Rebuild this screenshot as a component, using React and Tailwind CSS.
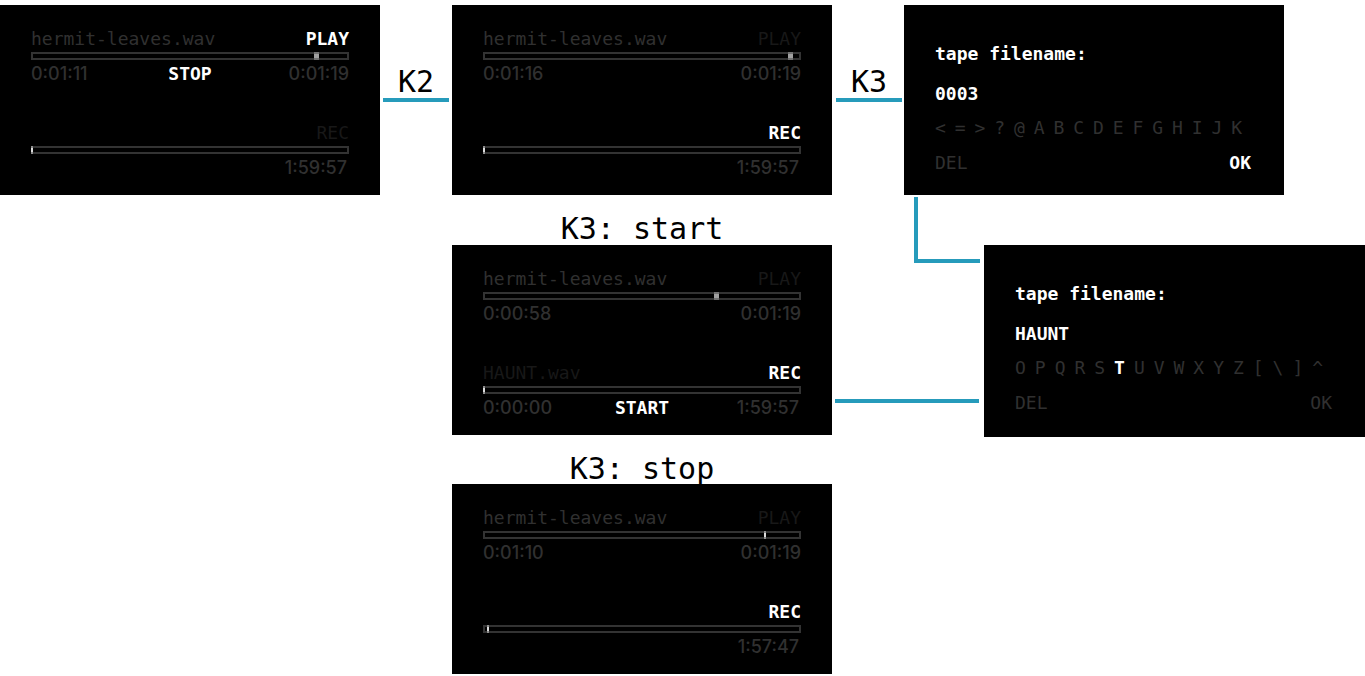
import React from "react";

const DIM = "text-[#303030]";
const FAINT = "text-[#181818]";
const LIT = "text-white font-bold";

const MONO = "font-['DejaVu_Sans_Mono',monospace]";
const TIME = "font-['Inter',sans-serif] font-medium";

function Bar({ label, at, size = "narrow" }) {
  return (
    <div
      role="progressbar"
      aria-label={label}
      aria-valuenow={Math.max(0, Math.round(at))}
      className="relative mt-[3px] mb-1 h-2 border-2 border-[#333333]"
    >
      <span
        className={
          size === "wide"
            ? "absolute -top-0.5 h-2 w-[5px] border-y-2 border-[#707070] bg-[#a0a0a0]"
            : "absolute -top-0.5 h-2 w-0.5 border-y-2 border-[#8c8c8c] bg-[#dcdcdc]"
        }
        style={{ left: `${at}%` }}
      />
    </div>
  );
}

function Track({ name, nameTone = DIM, mode, active, at, marker, elapsed, action, total, inset }) {
  return (
    <section>
      <div className="flex h-5 items-center justify-between">
        <span className={nameTone}>{name}</span>
        <button type="button" className={active ? LIT : FAINT}>
          {mode}
        </button>
      </div>
      <Bar label={`${mode} position`} at={at} size={marker} />
      <div className={`grid h-5 grid-cols-3 items-center ${DIM}`}>
        <span className={TIME}>{elapsed}</span>
        <span className="text-center">
          {action && (
            <button type="button" className={LIT}>
              {action}
            </button>
          )}
        </span>
        <span className={`text-right ${TIME} ${inset ? "pr-0.5" : ""}`}>{total}</span>
      </div>
    </section>
  );
}

function TapeScreen({ className, play, rec }) {
  return (
    <article
      className={`flex flex-col gap-[39px] self-start bg-black px-[31px] pt-6 pb-[17px] text-lg leading-5 ${MONO} ${className}`}
    >
      <Track name="hermit-leaves.wav" mode="PLAY" total="0:01:19" marker="wide" {...play} />
      <Track mode="REC" inset {...rec} />
    </article>
  );
}

function NameScreen({ className, id, value, keys, selected, okActive }) {
  return (
    <form
      className={`flex flex-col self-start bg-black pt-[39px] pr-[33px] pl-[31px] text-lg leading-5 ${MONO} ${className}`}
    >
      <label htmlFor={id} className={LIT}>
        tape filename:
      </label>
      <input
        id={id}
        defaultValue={value}
        className={`mt-5 h-5 w-full bg-transparent outline-none ${LIT}`}
      />
      <div className="mt-[14px] grid grid-cols-16">
        {keys.map((key) => (
          <button
            key={key}
            type="button"
            className={`text-left ${key === selected ? LIT : DIM}`}
          >
            {key}
          </button>
        ))}
      </div>
      <div className="mt-[15px] flex justify-between">
        <button type="button" className={DIM}>
          DEL
        </button>
        <button type="button" className={okActive ? LIT : DIM}>
          OK
        </button>
      </div>
    </form>
  );
}

function Step({ className, children }) {
  return (
    <div className={`flex flex-col pt-[61px] text-center ${className}`}>
      <span className="leading-8">{children}</span>
      <span className="h-1 bg-[#269bbb]" />
    </div>
  );
}

export default function App() {
  return (
    <main
      className={`grid min-w-[1100px] grid-cols-[380fr_72fr_380fr_72fr_80fr_300fr_81fr] bg-white pt-[5px] pb-0.5 text-[30px] text-black ${MONO}`}
    >
      <TapeScreen
        className="col-start-1 row-start-1"
        play={{ active: true, at: 89.5, elapsed: "0:01:11", action: "STOP" }}
        rec={{ at: -0.5, total: "1:59:57" }}
      />
      <Step className="col-start-2 row-start-1 px-[3px]">K2</Step>
      <TapeScreen
        className="col-start-3 row-start-1"
        play={{ at: 96.5, elapsed: "0:01:16" }}
        rec={{ active: true, at: -0.5, total: "1:59:57" }}
      />
      <Step className="col-start-4 row-start-1 pr-0.5 pl-1">K3</Step>
      <NameScreen
        className="col-span-2 col-start-5 row-start-1 pb-[22px]"
        id="tape-default"
        value="0003"
        keys={[..."<=>?@ABCDEFGHIJK"]}
        okActive
      />

      <p className="col-start-3 row-start-2 h-[50px] pt-[18px] text-center leading-8">K3: start</p>
      <span className="col-start-5 row-span-2 row-start-2 mt-0.5 mr-1 ml-[10px] h-[66px] border-b-4 border-l-4 border-[#269bbb]" />

      <TapeScreen
        className="col-start-3 row-start-3"
        play={{ at: 73, elapsed: "0:00:58" }}
        rec={{
          name: "HAUNT.wav",
          nameTone: FAINT,
          active: true,
          at: -0.5,
          elapsed: "0:00:00",
          action: "START",
          total: "1:59:57",
        }}
      />
      <span className="col-span-2 col-start-4 row-start-3 mr-[5px] mb-[34px] ml-[3px] h-1 self-end bg-[#269bbb]" />
      <NameScreen
        className="col-span-2 col-start-6 row-start-3 pb-6"
        id="tape-custom"
        value="HAUNT"
        keys={[..."OPQRSTUVWXYZ[\\]^"]}
        selected="T"
      />

      <p className="col-start-3 row-start-4 h-[47px] pt-4 text-center leading-8">K3: stop</p>
      <TapeScreen
        className="col-start-3 row-start-5"
        play={{ at: 89, marker: "narrow", elapsed: "0:01:10" }}
        rec={{ active: true, at: 0.5, total: "1:57:47" }}
      />
    </main>
  );
}
